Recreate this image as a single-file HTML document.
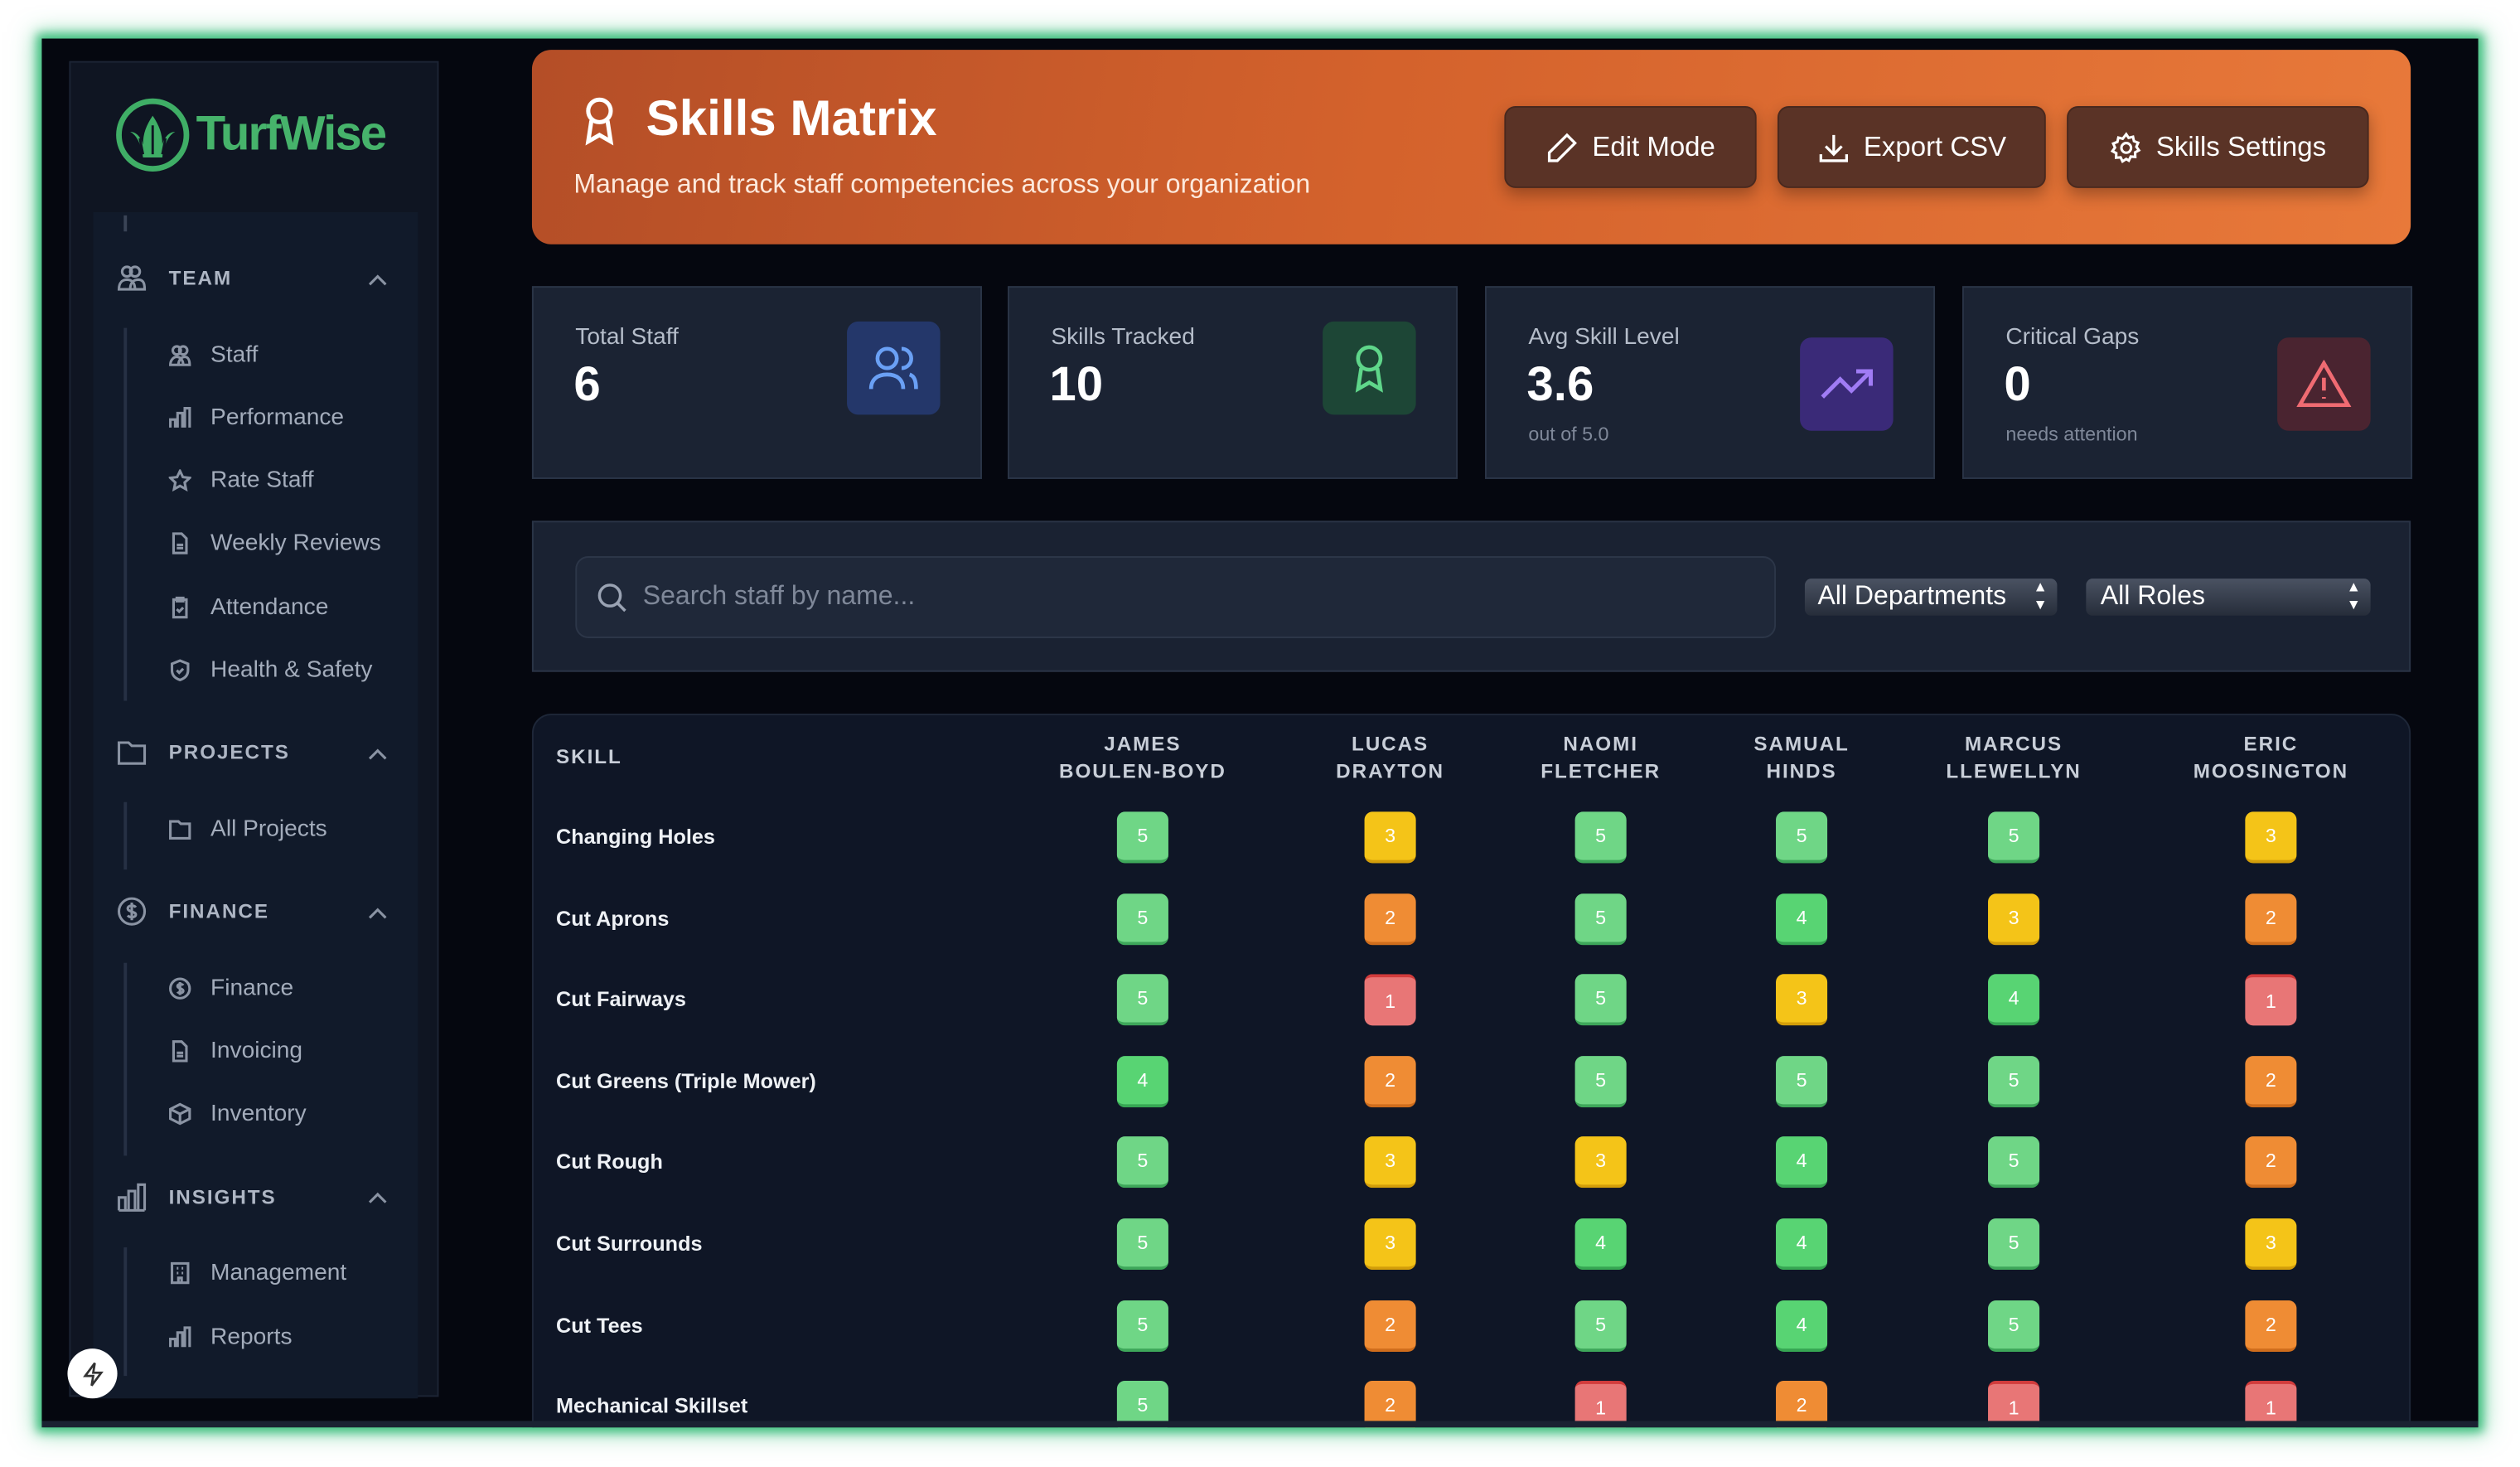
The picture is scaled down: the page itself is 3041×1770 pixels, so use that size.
<!DOCTYPE html>
<html><head><meta charset="utf-8">
<style>
*{box-sizing:border-box;margin:0;padding:0}
html,body{width:3041px;height:1770px;overflow:hidden;background:#fff;font-family:"Liberation Sans",sans-serif}
#w{position:absolute;left:0;top:0;width:1568px;height:912px;transform:scale(1.9394);transform-origin:0 0}
.frame{position:absolute;left:26px;top:24px;width:1516px;height:864px;background:#05070f;box-shadow:0 0 6px 3px #3fbf7f,0 0 14px 4px rgba(63,191,127,.5);overflow:hidden}
.abs{position:absolute}
.side{left:17px;top:14px;width:230px;height:831px;background:#0f1522;border:1px solid #1c2434}
.navp{left:14px;top:93px;width:202px;height:738px;background:#111a2a}
.sec{position:absolute;left:47px;font-size:12.5px;font-weight:bold;letter-spacing:1px;color:#aeb6c4}
.it{position:absolute;left:105px;font-size:14.5px;color:#a3acbb}
.ic{position:absolute;stroke:#8a93a3;fill:none;stroke-width:1.6}
.hdr{left:305px;top:7px;width:1169px;height:121px;border-radius:12px;background:linear-gradient(100deg,#b44e27 0%,#d4622c 45%,#e8793a 100%)}
.btn{position:absolute;top:35px;height:51px;border-radius:7px;background:#5a3326;box-shadow:0 4px 10px rgba(0,0,0,.3);color:#fff;font-size:17px;display:flex;align-items:center;justify-content:center;gap:9px;border:1px solid rgba(0,0,0,.2)}
.card{position:absolute;top:154px;width:280px;height:120px;background:#1b2333;border:1px solid #2a3446}
.card .l{position:absolute;left:26px;top:23px;font-size:14.5px;color:#b5bdca}
.card .v{position:absolute;left:25px;top:44px;font-size:30px;font-weight:bold;color:#fff}
.card .s{position:absolute;left:26px;top:84px;font-size:12px;color:#7f8899}
.card .b{position:absolute;right:25px;width:58px;height:58px;border-radius:7px;display:flex;align-items:center;justify-content:center}
.filt{left:305px;top:300px;width:1169px;height:94px;background:#1a2232;border:1px solid #2a3446}
.tbl{left:305px;top:420px;width:1169px;height:460px;background:#0f1626;border:1px solid #1e2738;border-radius:12px}
.th{position:absolute;top:10px;font-size:12.5px;font-weight:bold;letter-spacing:1px;color:#c8ced8;text-align:center;line-height:16.5px;transform:translateX(-50%)}
.sk{position:absolute;left:14px;font-size:13px;font-weight:bold;color:#eef1f5}
.bd{position:absolute;width:32px;height:32px;border-radius:5px;color:#fff;font-size:12px;display:flex;align-items:center;justify-content:center;transform:translate(-50%,-50%)}
.c5{background:#6fd686;border-bottom:2px solid #3ea75a}.c4{background:#58d473;border-bottom:2px solid #36a653}.c3{background:#f4c418;border-bottom:2px solid #d39e0a}.c2{background:#ef8c34;border-bottom:2px solid #cf6d1c}.c1{background:#e87676;border-top:2px solid #d23c3c}
</style></head><body><div id="w">
<div class="frame">
<div class="abs side">
 <div class="abs" style="left:27px;top:21px;display:flex;align-items:center;gap:3px">
  <svg width="48" height="48" viewBox="0 0 48 48"><circle cx="24" cy="24" r="21" fill="none" stroke="#3fae66" stroke-width="3.5"/><path d="M10 22c4 2 7 8 8 16h12c1-8 4-14 8-16-4 0-7 4-8 8 0-7-2-12-6-18-4 6-6 11-6 18-1-4-4-8-8-8z" fill="#3fae66"/><path d="M18 36l-2-10M30 36l2-10M24 36V18" stroke="#0f1522" stroke-width="1.5"/></svg>
  <span style="font-size:30px;font-weight:bold;color:#46b36b;letter-spacing:-1px">TurfWise</span>
 </div>
 <div class="abs navp"></div>
 <div class="abs" style="left:33px;top:95px;width:2px;height:10px;background:#3a4456"></div>
 <div class="abs" style="left:33px;top:165px;width:2px;height:232px;background:#263044"></div>
 <div class="abs" style="left:33px;top:460px;width:2px;height:42px;background:#263044"></div>
 <div class="abs" style="left:33px;top:560px;width:2px;height:120px;background:#263044"></div>
 <div class="abs" style="left:33px;top:737px;width:2px;height:80px;background:#263044"></div>
</div>
<!-- nav text positioned in frame coords (frame origin 26,24) -->
<svg class="ic" style="left:47px;top:140px" width="18" height="18" viewBox="0 0 18 18"><circle cx="6" cy="5" r="3"/><circle cx="11" cy="5" r="3"/><path d="M1 16c0-4 2-6 5-6s5 2 5 6zM8 16c0-4 2-6 5-6s4 2 4 6z"/></svg>
<div class="sec" style="left:79px;top:142px">TEAM</div>
<div class="sec" style="left:79px;top:437px">PROJECTS</div>
<div class="sec" style="left:79px;top:536px">FINANCE</div>
<div class="sec" style="left:79px;top:714px">INSIGHTS</div>
<svg class="ic" style="left:47px;top:436px" width="18" height="16" viewBox="0 0 18 16"><path d="M1 2h6l2 2h8v11H1z"/></svg>
<svg class="ic" style="left:47px;top:534px" width="18" height="18" viewBox="0 0 18 18"><circle cx="9" cy="9" r="8"/><path d="M11.5 6.5c-1-1.5-5-1.5-5 .7S11.5 9 11.5 11s-4 2-5 .5M9 3.5v11"/></svg>
<svg class="ic" style="left:47px;top:712px" width="18" height="18" viewBox="0 0 18 18"><path d="M1 17V9h4v8M7 17V5h4v12M13 17V1h4v16M1 17h16"/></svg>
<svg class="ic" style="left:203px;top:146px" width="12" height="8" viewBox="0 0 12 8"><path d="M1 7l5-5 5 5"/></svg>
<svg class="ic" style="left:203px;top:441px" width="12" height="8" viewBox="0 0 12 8"><path d="M1 7l5-5 5 5"/></svg>
<svg class="ic" style="left:203px;top:540px" width="12" height="8" viewBox="0 0 12 8"><path d="M1 7l5-5 5 5"/></svg>
<svg class="ic" style="left:203px;top:717px" width="12" height="8" viewBox="0 0 12 8"><path d="M1 7l5-5 5 5"/></svg>
<div class="it" style="top:189px">Staff</div>
<div class="it" style="top:228px">Performance</div>
<div class="it" style="top:267px">Rate Staff</div>
<div class="it" style="top:306px">Weekly Reviews</div>
<div class="it" style="top:346px">Attendance</div>
<div class="it" style="top:385px">Health &amp; Safety</div>
<div class="it" style="top:484px">All Projects</div>
<div class="it" style="top:583px">Finance</div>
<div class="it" style="top:622px">Invoicing</div>
<div class="it" style="top:661px">Inventory</div>
<div class="it" style="top:760px">Management</div>
<div class="it" style="top:800px">Reports</div>
<svg class="ic" style="left:79px;top:190px" width="14" height="14" viewBox="0 0 14 14"><circle cx="5" cy="4" r="2.5"/><circle cx="9" cy="4" r="2.5"/><path d="M1 13c0-3 2-5 4-5s4 2 4 5zM6 13c0-3 2-5 4-5s3 2 3 5z"/></svg>
<svg class="ic" style="left:79px;top:229px" width="14" height="14" viewBox="0 0 14 14"><path d="M1 13V8h3v5M5.5 13V4h3v9M10 13V1h3v12"/></svg>
<svg class="ic" style="left:79px;top:268px" width="14" height="14" viewBox="0 0 14 14"><path d="M7 1l1.8 3.8 4.2.5-3.1 2.9.8 4.1L7 10.3 3.3 12.3l.8-4.1L1 5.3l4.2-.5z"/></svg>
<svg class="ic" style="left:79px;top:307px" width="14" height="14" viewBox="0 0 14 14"><path d="M3 1h5l3 3v9H3zM5 8h4M5 10h4"/></svg>
<svg class="ic" style="left:79px;top:347px" width="14" height="14" viewBox="0 0 14 14"><path d="M3 2h8v11H3zM5 1h4v2H5zM5 8l1.5 1.5L9 7"/></svg>
<svg class="ic" style="left:79px;top:386px" width="14" height="14" viewBox="0 0 14 14"><path d="M7 1l5 2v4c0 3-2 5-5 6-3-1-5-3-5-6V3zM5 7l1.5 1.5L9 6"/></svg>
<svg class="ic" style="left:79px;top:485px" width="14" height="14" viewBox="0 0 14 14"><path d="M1 2h5l1.5 1.5H13v9H1z"/></svg>
<svg class="ic" style="left:79px;top:584px" width="14" height="14" viewBox="0 0 14 14"><circle cx="7" cy="7" r="6"/><path d="M9 5c-.7-1-3.5-1-3.5.5S9 7 9 8.5s-3 1.5-3.5.5M7 3v8"/></svg>
<svg class="ic" style="left:79px;top:623px" width="14" height="14" viewBox="0 0 14 14"><path d="M3 1h5l3 3v9H3zM5 8h4M5 10h4"/></svg>
<svg class="ic" style="left:79px;top:662px" width="14" height="14" viewBox="0 0 14 14"><path d="M7 1l6 3v6l-6 3-6-3V4zM1 4l6 3 6-3M7 7v6"/></svg>
<svg class="ic" style="left:79px;top:761px" width="14" height="14" viewBox="0 0 14 14"><path d="M2 1h10v12H2zM5 4h1M8 4h1M5 7h1M8 7h1M6 13v-3h2v3"/></svg>
<svg class="ic" style="left:79px;top:801px" width="14" height="14" viewBox="0 0 14 14"><path d="M1 13V8h3v5M5.5 13V4h3v9M10 13V1h3v12"/></svg>
<div class="abs" style="left:16px;top:815px;width:31px;height:31px;border-radius:50%;background:#fff;display:flex;align-items:center;justify-content:center"><svg width="14" height="16" viewBox="0 0 14 16" fill="none" stroke="#333" stroke-width="1.4"><path d="M8 1L2 9h5l-1 6 6-8H7z"/></svg></div>

<div class="abs hdr">
 <svg class="abs" style="left:28px;top:28px" width="28" height="32" viewBox="0 0 28 32" fill="none" stroke="#fff" stroke-width="2.6"><circle cx="14" cy="10" r="7"/><path d="M9 16l-2 13 7-4 7 4-2-13"/></svg>
 <div class="abs" style="left:71px;top:25px;font-size:31px;font-weight:bold;color:#fff">Skills Matrix</div>
 <div class="abs" style="left:26px;top:75px;font-size:16.5px;color:#fde9dc">Manage and track staff competencies across your organization</div>
 <div class="btn" style="left:605px;width:157px"><svg width="20" height="20" viewBox="0 0 20 20" fill="none" stroke="#fff" stroke-width="1.7"><path d="M13 2l5 5L7 18H2v-5z"/></svg>Edit Mode</div>
 <div class="btn" style="left:775px;width:167px"><svg width="20" height="20" viewBox="0 0 20 20" fill="none" stroke="#fff" stroke-width="1.7"><path d="M10 2v11M5 9l5 5 5-5M2 14v4h16v-4"/></svg>Export CSV</div>
 <div class="btn" style="left:955px;width:188px"><svg width="20" height="20" viewBox="0 0 20 20" fill="none" stroke="#fff" stroke-width="1.6"><circle cx="10" cy="10" r="3"/><path d="M10 1.5l1.5 2.3 2.7-.7.6 2.7 2.6 1-1.1 2.5 1.6 2.2-2.4 1.3.1 2.8-2.8-.2-1.2 2.5L10 16.9l-2.3 1.5-1.2-2.5-2.8.2.1-2.8-2.4-1.3 1.6-2.2-1.1-2.5 2.6-1 .6-2.7 2.7.7z"/></svg>Skills Settings</div>
</div>

<div class="card" style="left:305px"><div class="l">Total Staff</div><div class="v">6</div><div class="b" style="top:21px;background:#24376a"><svg width="32" height="30" viewBox="0 0 32 30" fill="none" stroke="#6aa0f5" stroke-width="2.4"><circle cx="12" cy="9" r="6"/><path d="M2 28c0-6 4-9 10-9s10 3 10 9M21 3a6 6 0 010 12M26 19c3 1 4 4 4 9"/></svg></div></div>
<div class="card" style="left:601px"><div class="l">Skills Tracked</div><div class="v">10</div><div class="b" style="top:21px;background:#1d4636"><svg width="24" height="32" viewBox="0 0 24 32" fill="none" stroke="#5fd68a" stroke-width="2.4"><circle cx="12" cy="10" r="7"/><path d="M7 16l-2 13 7-4 7 4-2-13"/></svg></div></div>
<div class="card" style="left:898px"><div class="l">Avg Skill Level</div><div class="v">3.6</div><div class="s">out of 5.0</div><div class="b" style="top:31px;background:#3a2a78"><svg width="34" height="22" viewBox="0 0 34 22" fill="none" stroke="#a07cf5" stroke-width="2.6"><path d="M2 19l11-11 7 7L32 3M23 3h9v9"/></svg></div></div>
<div class="card" style="left:1195px"><div class="l">Critical Gaps</div><div class="v">0</div><div class="s">needs attention</div><div class="b" style="top:31px;background:#4a2430"><svg width="34" height="30" viewBox="0 0 34 30" fill="none" stroke="#f06b72" stroke-width="2.4"><path d="M17 2L2 28h30zM17 11v8M17 23v1"/></svg></div></div>

<div class="abs filt">
 <div class="abs" style="left:26px;top:21px;width:747px;height:51px;border-radius:8px;background:#1f2839;border:1px solid #2c3648"></div>
 <svg class="abs" style="left:39px;top:37px" width="20" height="20" viewBox="0 0 20 20" fill="none" stroke="#9aa3b3" stroke-width="1.8"><circle cx="8.5" cy="8.5" r="6.5"/><path d="M13.5 13.5L18 18"/></svg>
 <div class="abs" style="left:68px;top:37px;font-size:16.5px;color:#7f8899">Search staff by name...</div>
 <div class="abs" style="left:791px;top:35px;width:157px;height:23px;border-radius:4px;background:linear-gradient(#4a5262,#262d3a);color:#fff;font-size:16.5px;padding-left:8px;line-height:23px">All Departments<span style="position:absolute;right:6px;top:0;font-size:9px;line-height:11px">▲<br>▼</span></div>
 <div class="abs" style="left:966px;top:35px;width:177px;height:23px;border-radius:4px;background:linear-gradient(#4a5262,#262d3a);color:#fff;font-size:16.5px;padding-left:9px;line-height:23px">All Roles<span style="position:absolute;right:6px;top:0;font-size:9px;line-height:11px">▲<br>▼</span></div>
</div>

<div class="abs tbl">
 <div class="abs" style="left:14px;top:19px;font-size:12.5px;font-weight:bold;letter-spacing:1px;color:#c8ced8">SKILL</div>
 <div class="th" style="left:379px">JAMES<br>BOULEN-BOYD</div>
 <div class="th" style="left:533px">LUCAS<br>DRAYTON</div>
 <div class="th" style="left:664px">NAOMI<br>FLETCHER</div>
 <div class="th" style="left:789px">SAMUAL<br>HINDS</div>
 <div class="th" style="left:921px">MARCUS<br>LLEWELLYN</div>
 <div class="th" style="left:1081px">ERIC<br>MOOSINGTON</div>
 <div id="rows"></div>
</div>
<div class="abs" style="left:0;top:860px;width:1516px;height:4px;background:#1a2232"></div>
</div>
</div>
<script>
var d=[["Changing Holes",[5,3,5,5,5,3]],["Cut Aprons",[5,2,5,4,3,2]],["Cut Fairways",[5,1,5,3,4,1]],["Cut Greens (Triple Mower)",[4,2,5,5,5,2]],["Cut Rough",[5,3,3,4,5,2]],["Cut Surrounds",[5,3,4,4,5,3]],["Cut Tees",[5,2,5,4,5,2]],["Mechanical Skillset",[5,2,1,2,1,1]]];
var xs=[379,533,664,789,921,1081],h="";
d.forEach(function(r,i){var y=76+i*50.6;h+='<div class="sk" style="top:'+(y-8)+'px">'+r[0]+'</div>';r[1].forEach(function(v,j){h+='<div class="bd c'+v+'" style="left:'+xs[j]+'px;top:'+y+'px">'+v+'</div>'})});
document.getElementById('rows').innerHTML=h;
</script>
</body></html>
